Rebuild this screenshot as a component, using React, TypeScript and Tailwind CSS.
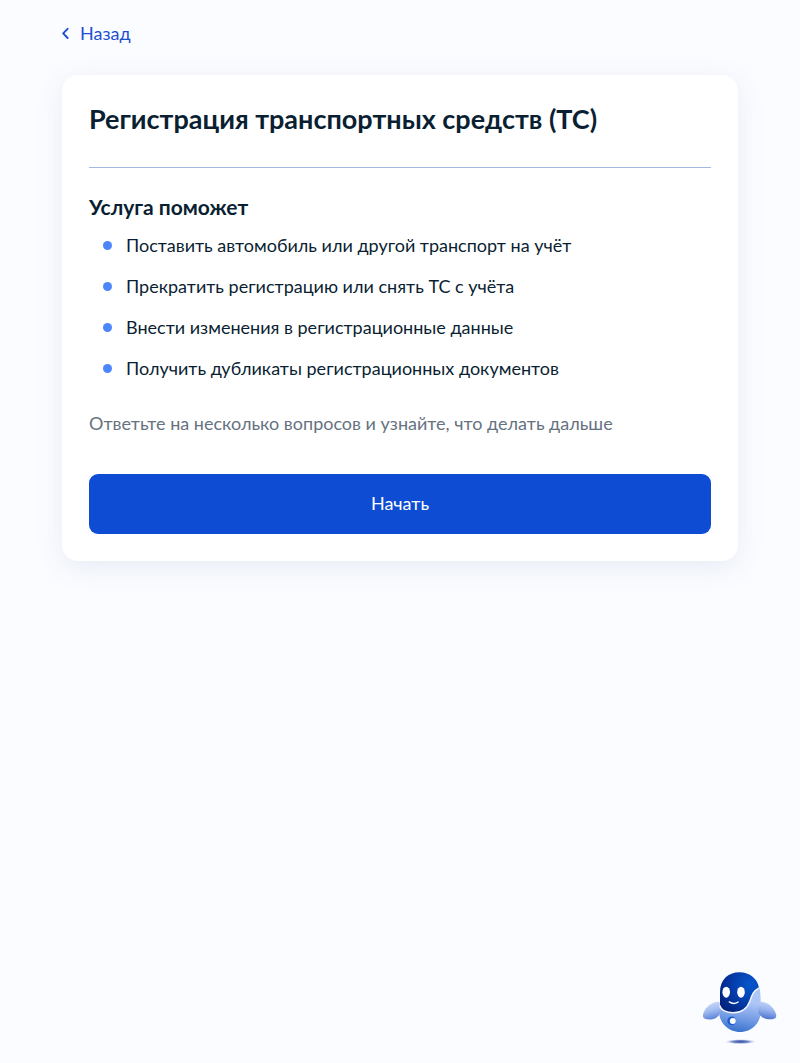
import type { JSX } from "react";

const BENEFITS = [
  "Поставить автомобиль или другой транспорт на учёт",
  "Прекратить регистрацию или снять ТС с учёта",
  "Внести изменения в регистрационные данные",
  "Получить дубликаты регистрационных документов",
];

function BackLink() {
  return (
    <a href="#back" className="inline-flex items-center gap-[11px] text-lg leading-7 text-[#1d4fd0]">
      <svg width="7" height="12" viewBox="0 0 7 12" fill="none" aria-hidden="true">
        <path
          d="M5.6 1.8 1.2 6.4l4.4 4.6"
          stroke="currentColor"
          strokeWidth="1.9"
          strokeLinecap="round"
          strokeLinejoin="round"
        />
      </svg>
      Назад
    </a>
  );
}

function BenefitItem({ text }: { text: string }) {
  return (
    <li className="flex items-center gap-3.5 text-lg leading-[27px]">
      <span className="size-[9px] shrink-0 rounded-full bg-[#4d85fa]" />
      <span>{text}</span>
    </li>
  );
}

function RobotButton() {
  return (
    <button
      type="button"
      aria-label="Робот-помощник"
      className="fixed right-5 bottom-4 cursor-pointer"
    >
      <svg width="80" height="80" viewBox="0 0 80 80" aria-hidden="true">
        <defs>
          <linearGradient id="body" x1="0.6" y1="0" x2="0.45" y2="1">
            <stop offset="0.3" stopColor="#adc6f6" />
            <stop offset="0.7" stopColor="#7099e3" />
            <stop offset="1" stopColor="#3873cd" />
          </linearGradient>
          <radialGradient id="face" cx="0.78" cy="0.3" r="0.85">
            <stop offset="0" stopColor="#0657cd" />
            <stop offset="0.55" stopColor="#043ca9" />
            <stop offset="1" stopColor="#022480" />
          </radialGradient>
          <linearGradient id="wingLeft" x1="0.4" y1="0" x2="0.65" y2="1">
            <stop offset="0" stopColor="#cfdcfb" />
            <stop offset="0.5" stopColor="#a0baf0" />
            <stop offset="1" stopColor="#567dd6" />
          </linearGradient>
          <linearGradient id="wingRight" x1="0.6" y1="0" x2="0.4" y2="1">
            <stop offset="0" stopColor="#c5d6fa" />
            <stop offset="0.5" stopColor="#94b0ec" />
            <stop offset="1" stopColor="#4a70cd" />
          </linearGradient>
          <radialGradient id="shadow">
            <stop offset="0" stopColor="#344fa5" />
            <stop offset="0.5" stopColor="#7589c8" />
            <stop offset="1" stopColor="#dfe6f8" stopOpacity="0" />
          </radialGradient>
        </defs>
        <ellipse cx="40.5" cy="74.7" rx="16" ry="2.6" fill="url(#shadow)" />
        <path
          d="M20 36V27h30l9.5-6c1 5 1.3 10 1.3 23 0 12-9 21-20.6 21S19 56 19 44z"
          fill="url(#body)"
        />
        <path
          d="M19.5 35C14 34 8 38.500 5 43c-1.8 2.8-2.6 5.5-1.8 7.3 1.3 2.6 8.3 2.9 12.3.9C18.5 49.7 20 47 20 44z"
          fill="url(#wingLeft)"
        />
        <path
          d="M59.5 35C65 34 71 38 74 42.8c1.8 2.8 2.8 5.7 2 7.5-1.3 2.600-8.6 2.600-12.7.5C60.3 49.3 58 46 58 43c0-3 0-6 1.5-8z"
          fill="url(#wingRight)"
        />
        <path
          d="M20 25C20 13 28 5.3 39.5 5.3c10.500 0 18 6.7 19.5 15.5-5 3-7 7-9 13-2 7-7.5 12-16.5 12-7 0-13.500-2.800-13.500-7.500z"
          fill="url(#face)"
        />
        <path
          d="M19.8 38.5c1 4.7 6.7 7.3 13.7 7.3 9 0 14-5 16.500-12 2-6 3.500-10 9-13"
          fill="none"
          stroke="#f0f5ff"
          strokeWidth="1.5"
        />
        <ellipse cx="26.2" cy="25.2" rx="3.8" ry="5.500" fill="#fff" />
        <ellipse cx="41" cy="25.2" rx="3.8" ry="5.500" fill="#fff" />
        <path
          d="M29.3 34.9q4.500 3.2 8.8 0"
          fill="none"
          stroke="#fff"
          strokeWidth="1.3"
          strokeLinecap="round"
        />
        <circle cx="31.7" cy="53.9" r="4.3" fill="#1f5bd2" />
        <circle cx="32.8" cy="54" r="3" fill="#fff" />
      </svg>
    </button>
  );
}

export default function App(): JSX.Element {
  return (
    <div className="min-h-screen bg-[#fbfcff] px-[62px] pt-[19px] pb-10 font-['Lato','Noto_Sans',sans-serif] text-[#0b1f33]">
      <nav>
        <BackLink />
      </nav>
      <main className="mt-7 rounded-2xl bg-white p-[27px] shadow-[0_6px_28px_rgba(50,90,150,0.10)]">
        <h1 className="text-[27px] leading-[34px] font-bold">
          Регистрация транспортных средств (ТС)
        </h1>
        <hr className="mt-[31px] h-px border-0 bg-[#a3b9e2]" />
        <h2 className="mt-[25px] text-[21px] leading-7 font-bold">Услуга поможет</h2>
        <ul className="mt-[11px] flex flex-col gap-3.5 pl-3.5">
          {BENEFITS.map((text) => (
            <BenefitItem key={text} text={text} />
          ))}
        </ul>
        <p className="mt-7 text-lg leading-[27px] text-[#66727f]">
          Ответьте на несколько вопросов и узнайте, что делать дальше
        </p>
        <button
          type="button"
          className="mt-[37px] h-15 w-full cursor-pointer rounded-[9px] bg-[#0d4cd3] pb-0.5 text-lg text-white"
        >
          Начать
        </button>
      </main>
      <RobotButton />
    </div>
  );
}
